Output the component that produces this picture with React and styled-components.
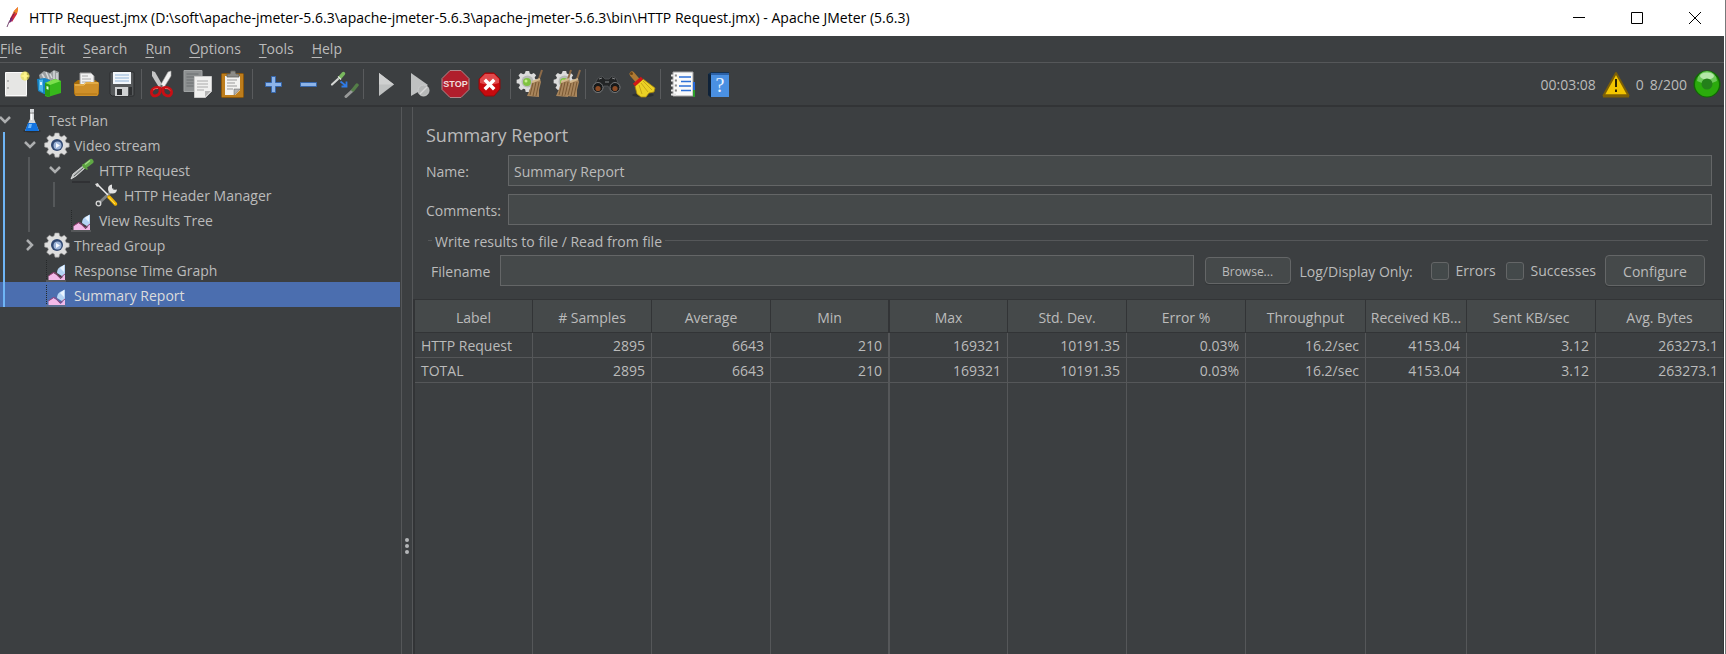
import React from "react";
import styled, { createGlobalStyle } from "styled-components";

const c = {
  bg: "#3c3f41",
  text: "#bbbbbb",
  line: "#555759",
  dark: "#323436",
  field: "#45494a",
  fieldBorder: "#646667",
  select: "#4b6eaf",
  accent: "#6fb5f5",
};

const Global = createGlobalStyle`
  * { box-sizing: border-box; }
  body { margin: 0; background: ${c.bg}; }
  body, button, input { font-family: "Open Sans", "Noto Sans", sans-serif; font-size: 14px; }
`;

const Window = styled.div`
  min-height: 100vh;
  display: flex;
  flex-direction: column;
  background: ${c.bg};
  color: ${c.text};
  line-height: 20px;
  border-right: 1px solid #77797a;
`;

/* Title bar */
const TitleBar = styled.header`
  height: 36px;
  flex: none;
  display: flex;
  align-items: center;
  padding: 0 1px 0 5px;
  background: #fff;
  color: #000;
`;
const WindowTitle = styled.h1`
  margin: 0 auto 0 8px;
  font-size: 14px;
  font-weight: 400;
  white-space: nowrap;
`;
const WindowButton = styled.button`
  width: 58px;
  height: 34px;
  display: flex;
  align-items: center;
  justify-content: center;
  padding: 0;
  border: 0;
  background: none;
`;

const Body = styled.div`
  flex: 1;
  display: flex;
  flex-direction: column;
  border-right: 1px solid #fff;
`;

/* Menu bar */
const MenuBar = styled.nav`
  height: 27px;
  display: flex;
  align-items: center;
  gap: 18px;
  border-bottom: 1px solid ${c.line};
`;
const MenuItem = styled.button`
  padding: 0;
  border: 0;
  background: none;
  color: inherit;
  line-height: 20px;
  &::first-letter {
    text-decoration: underline;
    text-underline-offset: 3px;
  }
`;

/* Tool bar */
const ToolBar = styled.div`
  height: 44px;
  display: flex;
  align-items: center;
  border-bottom: 2px solid ${c.dark};
`;
const ToolGroup = styled.div`
  height: 30px;
  display: flex;
  align-items: center;
  gap: 8px;
  padding: 0 4px 0 ${(p) => (p.$first ? "1px" : "6px")};
  border-right: ${(p) => (p.$last ? "0" : `1px solid #595b5d`)};
`;
const ToolButton = styled.button`
  width: 28px;
  height: 28px;
  padding: 0;
  border: 0;
  background: none;
  svg {
    display: block;
    overflow: visible;
  }
`;
const Status = styled.div`
  margin-left: auto;
  padding-right: 3px;
  display: flex;
  align-items: center;
  gap: 6px;
  span { padding-top: 2px; }
`;

/* Split view */
const Split = styled.main`
  flex: 1;
  display: flex;
`;
const TreePane = styled.aside`
  width: 401px;
  flex: none;
  padding-right: 1px;
`;
const TreeList = styled.ul`
  margin: 0;
  padding: 0;
  list-style: none;
`;
const TreeBranch = styled(TreeList)`
  background: linear-gradient(${(p) => (p.$active ? c.accent : "#55585a")} 0 0) ${(p) => p.$x}px 0 / 2px 100% no-repeat;
`;
const TreeRow = styled.div`
  height: 25px;
  display: flex;
  align-items: center;
  padding-left: ${(p) => p.$level * 25}px;
  background: ${(p) => (p.$selected ? `linear-gradient(${c.accent} 0 0) 3px 0 / 2px 100% no-repeat ${c.select}` : "none")};
  color: ${(p) => (p.$selected ? "#dcdcdc" : "inherit")};
  white-space: nowrap;
`;
const TreeLabel = styled.span`
  padding-top: 2px;
`;
const Toggle = styled.button`
  width: 10px;
  height: 12px;
  margin-right: 10px;
  padding: 0;
  border: 0;
  background: none;
  visibility: ${(p) => (p.$hidden ? "hidden" : "visible")};
  svg {
    display: block;
    overflow: visible;
  }
`;
const TreeIcon = styled.svg`
  width: 24px;
  height: 24px;
  margin-right: 5px;
  overflow: visible;
`;
const Divider = styled.div`
  width: 12px;
  flex: none;
  display: flex;
  flex-direction: column;
  align-items: center;
  justify-content: flex-end;
  gap: 2px;
  padding-bottom: 100px;
  border: solid ${c.line};
  border-width: 0 1px;
`;
const Dot = styled.span`
  width: 4px;
  height: 4px;
  border-radius: 50%;
  background: #b4b6b8;
`;

/* Report pane */
const Report = styled.section`
  flex: 1;
  min-width: 0;
  display: flex;
  flex-direction: column;
`;
const Heading = styled.h2`
  margin: 0;
  padding: 14px 13px 6px;
  font-size: 18px;
  line-height: 28px;
  font-weight: 400;
`;
const FieldGrid = styled.div`
  display: grid;
  grid-template-columns: 82px 1fr;
  row-gap: 8px;
  align-items: center;
  padding: 0 12px 0 13px;
  label { padding-top: 2px; }
`;
const TextField = styled.input`
  width: 100%;
  min-width: 0;
  height: 31px;
  padding: 2px 5px 0;
  border: 1px solid ${c.fieldBorder};
  background: ${c.field};
  color: ${c.text};
`;
const FileGroup = styled.fieldset`
  min-width: 0;
  margin: 4px 16px 13px 15px;
  padding: 3px 3px 0;
  border: 0;
  border-top: 1px solid ${c.line};
`;
const Legend = styled.legend`
  margin-left: 1px;
  padding: 3px 3px 0;
`;
const FileRow = styled.div`
  display: flex;
  align-items: center;
  white-space: nowrap;
`;
const FileLabel = styled.label`
  width: 69px;
  flex: none;
  padding-top: 2px;
`;
const PushButton = styled.button`
  width: ${(p) => (p.$small ? "86px" : "100px")};
  height: ${(p) => (p.$small ? "27px" : "31px")};
  flex: none;
  margin-left: ${(p) => (p.$small ? "11px" : "9px")};
  padding: 2px 0 0;
  border: 1px solid ${c.fieldBorder};
  border-radius: 4px;
  background: ${c.field};
  color: ${c.text};
  font-size: ${(p) => (p.$small ? "12px" : "14px")};
  box-shadow: 0 1px 0 #333638;
`;
const FilterLabel = styled.span`
  width: 121px;
  flex: none;
  margin-left: 9px;
  padding-top: 2px;
`;
const Check = styled.label`
  flex: none;
  display: flex;
  align-items: center;
  gap: 7px;
  margin-left: 10px;
  input {
    appearance: none;
    width: 18px;
    height: 18px;
    margin: 0;
    border: 1px solid ${c.fieldBorder};
    border-radius: 3px;
    background: #43494a;
  }
`;
const TableWrap = styled.div`
  flex: 1;
  display: flex;
  border-left: 2px solid ${c.dark};
  border-top: 1px solid ${c.dark};
`;
const Table = styled.table`
  width: 100%;
  table-layout: fixed;
  border-collapse: separate;
  border-spacing: 0;
`;
const HeadCell = styled.th`
  height: 33px;
  padding: 3px 0 0;
  font-weight: 400;
  white-space: nowrap;
  background: ${c.field};
  border-right: ${(p) => (p.$heavy ? 2 : 1)}px solid ${c.dark};
  border-bottom: 1px solid ${c.dark};
`;
const Cell = styled.td`
  height: 25px;
  padding: 2px 6px 0;
  line-height: 20px;
  text-align: right;
  border-right: ${(p) => (p.$heavy ? 2 : 1)}px solid ${c.line};
  border-bottom: 1px solid ${c.line};
  &:first-child { text-align: left; }
  &:last-child { border-right-color: ${c.dark}; padding-right: 5px; }
`;
const FillerRow = styled.tr`
  height: 100%;
`;
const FillerCell = styled(Cell)`
  height: auto;
  border-bottom: 0;
`;

const Svg = ({ children }) => (
  <svg width="28" height="28" viewBox="0 0 28 28" aria-hidden="true">{children}</svg>
);

const GEAR =
  "M10 0h4l.7 3 1.9.8L19.300 2.200l2.700 2.700-1.700 2.700.8 1.900 3.100.7v3.800l-3.100.7-.8 1.900 1.700 2.700-2.700 2.700-2.700-1.700-1.900.8-.7 3.100h-4l-.7-3.100-1.900-.8-2.700 1.700L1.700 19.300l1.700-2.700-.8-1.900L-.4 14v-4l3-.7.8-1.900L1.700 4.900l2.700-2.700 2.700 1.600L9 3z";

const NewIcon = () => (
  <Svg>
    <path d="M4.500 2.500h21v23h-21z" fill="#e6e6e4" stroke="#fbfbfb" />
    <path d="M4 26.500h22" stroke="#8b8b8b" />
    <path d="M6 11h2M6 18h2" stroke="#aaa" strokeWidth="1.500" />
    <circle cx="24" cy="6" r="4.500" fill="#e9df4b" opacity=".7" />
    <path d="M24 1l1.200 3.800L29 6l-3.800 1.200L24 11l-1.200-3.800L19 6l3.800-1.200z" fill="#fff58a" />
  </Svg>
);
const TemplatesIcon = () => (
  <Svg>
    <path d="M2 5l5-4 6 2 4-3 5 2v9l-8 3H4z" fill="#9a9ea0" />
    <path d="M5 4l3 5M9 2l3 7M13 4l2 4M17 1v8M20 3v7" stroke="#d5d8da" strokeWidth="1.500" />
    <path d="M0 9l8-1 5 2v15l-6-1-6-3z" fill="#1683c4" />
    <path d="M2 10l4-.5v13L2 20z" fill="#4db4e8" />
    <path d="M3 12h2v3H3z" fill="#d8f0ff" />
    <path d="M8 13l10-4 6 2v12l-13 4-3-1z" fill="#37b81c" />
    <path d="M8 13l10-4 6 2-11 4z" fill="#7ce04d" />
    <path d="M8 13l5 2v12l-5-2z" fill="#2a9c14" />
    <path d="M9.500 16l2 .8v3l-2-.8z" fill="#e5ffe0" />
  </Svg>
);
const OpenIcon = () => (
  <Svg>
    <path d="M1 13l4-3h17l4 3v11l-2 2H3l-2-2z" fill="#a66c09" />
    <path d="M7 3h11l3 3v12H7z" fill="#f1f1f1" stroke="#9d9d9d" />
    <path d="M9 6h6M9 9h9M9 12h9" stroke="#aaa" />
    <path d="M1 14h10l2-2h12l1 1-1 12-1 1H3l-1-1z" fill="#cf9029" />
    <path d="M2 15h9l2-2h12" stroke="#f2c463" fill="none" />
    <path d="M2 24h22" stroke="#b07414" />
  </Svg>
);
const SaveIcon = () => (
  <Svg>
    <path d="M1 3q0-1 1-1h22q1 0 1 1v22q0 1-1 1H3l-2-2z" fill="#55585a" stroke="#2b2d2e" />
    <path d="M4 2h18v12H4z" fill="#f2f6fa" />
    <path d="M6 5h14M6 8h14M6 11h14" stroke="#8fb2d6" />
    <path d="M6 17h13v9H6z" fill="#d0d2d3" />
    <path d="M8 19h5v6H8z" fill="#2c2e30" />
    <path d="M20 17h3v8h-3z" fill="#2f3133" />
  </Svg>
);
const CutIcon = () => (
  <Svg>
    <path d="M4 1l3 1 8 14-3 3L4 6z" fill="#c4c5c5" />
    <path d="M23 1l-3 1-8 14 3 3 8-13z" fill="#f1f1f1" stroke="#a5a5a5" strokeWidth=".6" />
    <circle cx="13.500" cy="16" r="1.200" fill="#666" />
    <path d="M12 18c-4-2-9 1-8.500 5 .8 5 7.500 3 8.500-1z M15 18c4-2 9 1 8.500 5-.8 5-7.500 3-8.500-1z" fill="none" stroke="#c90f14" strokeWidth="2.800" />
    <path d="M5 20q2-2 5-1.500M17 18.500q4-.5 5 2" stroke="#f25a5a" fill="none" />
  </Svg>
);
const CopyIcon = () => (
  <Svg>
    <path d="M0 .5h18v21H0z" fill="#8d9091" stroke="#a0a3a4" />
    <path d="M2.500 4h12M2.500 7h12M2.500 10h7M2.500 13h7M2.500 16h7" stroke="#6b6e70" />
    <path d="M10.500 6.500h17v15l-6 6h-11z" fill="#f0f0ef" stroke="#c9c9c9" />
    <path d="M13 11h11M13 14h11M13 17h11M13 20h7" stroke="#aaa" />
    <path d="M27 21l-6 6v-6z" fill="#b5b5b5" />
  </Svg>
);
const PasteIcon = () => (
  <Svg>
    <rect x="1.500" y="3.500" width="22" height="24" rx="1" fill="#bd7d1c" stroke="#8a570c" />
    <path d="M5 6h15v14l-5 5H5z" fill="#f2f2f0" />
    <path d="M7 10h10M7 13h8M7 16h10M7 19h6" stroke="#999" />
    <path d="M20 19l-6 6v-6z" fill="#b0b0b0" stroke="#666" strokeWidth=".5" />
    <path d="M7 7V4h3l1-3h4l1 3h3v3z" fill="#8c8c88" stroke="#5f5f5c" strokeWidth=".8" />
  </Svg>
);
const PlusIcon = () => (
  <Svg>
    <path d="M12.500 6.500h4v6h6v4h-6v6h-4v-6h-6v-4h6z" fill="#8db4e8" stroke="#3566ab" />
  </Svg>
);
const MinusIcon = () => (
  <Svg>
    <path d="M5.500 12.500h16v4h-16z" fill="#8db4e8" stroke="#3566ab" />
  </Svg>
);
const ToggleIcon = () => (
  <Svg>
    <path d="M1 14.500l6-5.500" stroke="#d4d6d4" strokeWidth="2.200" strokeLinecap="round" />
    <path d="M9 7.500l3.500-4" stroke="#79b85e" strokeWidth="3.500" strokeLinecap="round" />
    <path d="M7 6.500l3 3" stroke="#e5e5e5" strokeWidth="1.200" />
    <path d="M9.500 11.500l5 4M15.500 11.500v5h-5" stroke="#2f7be6" strokeWidth="1.800" fill="none" />
    <g opacity=".7">
      <path d="M15 26.500l6-5.500" stroke="#bfc1bf" strokeWidth="3" strokeLinecap="round" />
      <path d="M22 20l4-5" stroke="#5f9a4b" strokeWidth="3.500" strokeLinecap="round" />
    </g>
  </Svg>
);
const PlayIcon = () => (
  <Svg>
    <path d="M9 3l15 11.500L9 26z" fill="#bfc1c1" />
    <path d="M9 3l15 11.500H9z" fill="#cfd0d0" />
  </Svg>
);
const PlayNoPauseIcon = () => (
  <Svg>
    <path d="M5 3l17 12-10 7-7 4z" fill="#bfc1c1" />
    <circle cx="17.500" cy="20.500" r="5.500" fill="#b6b8b8" stroke="#cbcccc" />
    <path d="M14 24l7-7" stroke="#d8d8d8" strokeWidth="1.500" />
  </Svg>
);
const StopIcon = () => (
  <Svg>
    <path d="M8 .5h11l8 8v11l-8 8H8l-8-8v-11z" fill="#b01e2c" stroke="#b3868a" />
    <text x="13.500" y="17" textAnchor="middle" fontFamily="Liberation Sans, sans-serif" fontWeight="700" fontSize="9" fill="#f1dcdc">STOP</text>
  </Svg>
);
const ShutdownIcon = () => (
  <Svg>
    <path d="M7 3h9l6 6v10l-6 7H7l-6-7V9z" fill="#c80a0e" stroke="#8f0b0d" strokeLinejoin="round" />
    <path d="M7 4h9l5 5v4q-10 3-19 0V9z" fill="#e04a4c" />
    <path d="M8 11l7 7M15 11l-7 7" stroke="#fff" strokeWidth="3.500" strokeLinecap="square" />
  </Svg>
);
const Brush = ({ x = 0 }) => (
  <g transform={`translate(${x})`}>
    <path d="M26 0l-4 12" stroke="#8d6b48" strokeWidth="2" />
    <path d="M16 12l8-3 1 3-2 8v7l-12-1 3-7z" fill="#a8855c" />
    <path d="M17 13l-3 12M20 12l-3 14M23 12l-3 14" stroke="#74542f" strokeWidth=".9" />
    <path d="M16 12l8-3" stroke="#d3b88e" strokeWidth="2" />
  </g>
);
const SmallGear = () => (
  <g>
    <path transform="translate(0 1) scale(.87)" d={GEAR} fill="#dcdcdc" />
    <circle cx="10.500" cy="11.500" r="6" fill="#b7bab8" />
    <circle cx="10" cy="12" r="4" fill="#7fc241" />
    <circle cx="9" cy="11" r="1.500" fill="#c6f08e" />
  </g>
);
const ClearIcon = () => (
  <Svg><SmallGear /><Brush x={-1} /></Svg>
);
const ClearAllIcon = () => (
  <Svg><g transform="translate(1)"><SmallGear /></g><Brush x={-8} /><Brush x={1} /></Svg>
);
const SearchIcon = () => (
  <Svg>
    <path d="M6 8l4-2 3 3h4l3-3 4 2 4 9-3 5h-6l-3-6h-4l-3 6H3l-2-5z" fill="#222425" stroke="#56595b" strokeWidth=".7" />
    <circle cx="6" cy="17.500" r="5" fill="#17191a" stroke="#77797b" />
    <circle cx="23" cy="17.500" r="5" fill="#17191a" stroke="#77797b" />
    <circle cx="6" cy="18.500" r="2.600" fill="#8d4b24" />
    <circle cx="23" cy="18.500" r="2.600" fill="#8d4b24" />
    <path d="M7 9l3-1M20 8l3 1M13 12h4" stroke="#85888a" />
  </Svg>
);
const BroomIcon = () => (
  <Svg>
    <ellipse cx="15" cy="25" rx="11" ry="2" fill="#2d3031" />
    <path d="M4 4l6 7" stroke="#b07a32" strokeWidth="5" strokeLinecap="round" />
    <circle cx="3.500" cy="3.500" r="1.500" fill="#6d4515" />
    <path d="M7 16l8-7 12 9-1 4-5 1-3 4-5 0-4-3z" fill="#ecd124" stroke="#a9890d" strokeWidth=".8" />
    <path d="M11 15l3 9M13 13l7 9M15 11l9 9" stroke="#c7a718" />
    <path d="M6 15l8-7" stroke="#cf1717" strokeWidth="3.500" />
  </Svg>
);
const NotebookIcon = () => (
  <Svg>
    <path d="M6 2h20v24H6z" fill="#fafafa" stroke="#a2a2a2" />
    <path d="M12 7h12M14 11.500h10M12 16h12M14 20.500h10" stroke="#2d6fd6" strokeWidth="1.500" />
    <path d="M26 12h2v8h-2z" fill="#2769d8" />
    <path d="M26 20h2v7h-2z" fill="#2c9f2c" />
    <path d="M4 5.500h5M4 10.500h5M4 15.500h5M4 20.500h5M4 24.500h5" stroke="#e4e4e4" strokeWidth="2" />
    <path d="M8.500 5.500h1M8.500 10.500h1M8.500 15.500h1M8.500 20.500h1" stroke="#333" strokeWidth="2" />
  </Svg>
);
const HelpIcon = () => (
  <Svg>
    <path d="M5 4l3-2h18v2L8 6v22l-3-3z" fill="#15314f" />
    <path d="M5 4v21l3 2V5z" fill="#0f2238" />
    <path d="M8 4h18v23H8z" fill="#4a90e2" />
    <path d="M8 3h18v2H8z" fill="#2c62a8" />
    <text x="17" y="22" textAnchor="middle" fontFamily="Liberation Serif, serif" fontSize="20" fill="#eaf4ff">?</text>
  </Svg>
);

const toolGroups = [
  [["New", NewIcon], ["Templates", TemplatesIcon], ["Open", OpenIcon], ["Save", SaveIcon]],
  [["Cut", CutIcon], ["Copy", CopyIcon], ["Paste", PasteIcon]],
  [["Expand All", PlusIcon], ["Collapse All", MinusIcon], ["Toggle", ToggleIcon]],
  [["Start", PlayIcon], ["Start no pauses", PlayNoPauseIcon], ["Stop", StopIcon], ["Shutdown", ShutdownIcon]],
  [["Clear", ClearIcon], ["Clear All", ClearAllIcon]],
  [["Search", SearchIcon], ["Reset Search", BroomIcon]],
  [["Function Helper", NotebookIcon], ["Help", HelpIcon]],
];

const WarningIcon = () => (
  <Svg>
    <path d="M14 3L1.500 25.500h25z" fill="#f2c500" stroke="#7c5f06" strokeWidth="2" strokeLinejoin="round" />
    <path d="M1 26h26" stroke="#7c5f06" strokeWidth="3" />
    <path d="M14 9v8" stroke="#2a2200" strokeWidth="2" />
    <path d="M14 19.500v2.500" stroke="#2a2200" strokeWidth="2" />
  </Svg>
);
const RunningIcon = () => (
  <Svg>
    <circle cx="14" cy="14" r="13.500" fill="#0f6a03" />
    <circle cx="14" cy="14.500" r="12" fill="#2bab0c" />
    <path d="M4 11a10 10 0 0 1 20 0q-10 5-20 0z" fill="#6cc959" />
    <ellipse cx="14" cy="6" rx="7" ry="3.500" fill="#b4e8a8" />
    <circle cx="14" cy="14" r="5.500" fill="#24801a" />
  </Svg>
);
const FeatherIcon = () => (
  <svg width="16" height="22" viewBox="0 0 16 22" aria-hidden="true">
    <path d="M13 0L9 4 5 12l2 3 5-8z" fill="#d2283a" />
    <path d="M13 0L9 4l-1 3 4-1 1-3z" fill="#f08a24" />
    <path d="M6 10l-2 6 2-1 2-3z" fill="#7b2a7d" />
    <path d="M10 5L4 15l-2 5" stroke="#5a2152" fill="none" strokeWidth=".8" />
  </svg>
);

const FlaskIcon = () => (
  <TreeIcon viewBox="0 0 24 24" aria-hidden="true">
    <ellipse cx="12" cy="23" rx="9" ry="1.500" fill="#2c2f30" />
    <path d="M10 1h4v10l5 12H5l5-12z" fill="#d4d7da" />
    <path d="M8 15h8l3 8H5z" fill="#1273e0" />
    <path d="M9 16h3l-1 4H8z" fill="#6db8ff" />
    <path d="M11.500 4v8" stroke="#fff" strokeWidth="1.500" />
    <path d="M10 5h4" stroke="#777" />
  </TreeIcon>
);
const GearIcon = () => (
  <TreeIcon viewBox="0 0 24 24" aria-hidden="true">
    <path d={GEAR} fill="#dedede" stroke="#9c9c9c" strokeWidth=".6" />
    <circle cx="12" cy="12" r="6" fill="#2f4771" />
    <circle cx="12.500" cy="12.500" r="4" fill="#9db4d8" />
    <path d="M11 10l4 2.500-4 2.500z" fill="#f4f8ff" />
  </TreeIcon>
);
const PipetteIcon = () => (
  <TreeIcon viewBox="0 0 24 24" aria-hidden="true">
    <path d="M2 24h18" stroke="#2c2e30" strokeWidth="1.500" />
    <path d="M1 21l2-5 10-8 2 2-9 8z" fill="#b8bcbc" stroke="#e8e8e8" strokeWidth=".8" />
    <path d="M4 18l9-8" stroke="#5c6061" strokeWidth="1" />
    <path d="M15 8l6-4.500" stroke="#5fa844" strokeWidth="5" strokeLinecap="round" />
    <path d="M15 6.500l5-4" stroke="#a3d888" strokeWidth="1.500" />
    <path d="M12.500 6.500l5 5" stroke="#5da43f" strokeWidth="1.500" />
  </TreeIcon>
);
const ToolsIcon = () => (
  <TreeIcon viewBox="0 0 24 24" aria-hidden="true">
    <path d="M4 20L19 6" stroke="#7f8283" strokeWidth="3" />
    <circle cx="3.500" cy="20.500" r="2.300" fill="none" stroke="#d8d8d8" strokeWidth="1.300" />
    <path d="M17 1.500a4.500 4.500 0 1 0 5 5l-3.500.5-1.500-2z" fill="#e2e2e2" />
    <path d="M2 1l11 11" stroke="#eee" strokeWidth="1.500" />
    <path d="M0 1l3-1 1 3-2 1z" fill="#ddd" />
    <path d="M14 14l6.500 7" stroke="#f0b400" strokeWidth="3.500" strokeLinecap="round" />
    <path d="M13.500 14l6.500 7" stroke="#ffe066" />
  </TreeIcon>
);
const ChartIcon = () => (
  <TreeIcon viewBox="0 0 24 24" aria-hidden="true">
    <path d="M1.500 2v20" stroke="#26292a" strokeDasharray="1 1" />
    <path d="M1 23h20" stroke="#6e7172" />
    <path d="M12 15q0-4 3-6l5-2.500V20z" fill="#b5d4f4" />
    <path d="M15 10l4-3v7z" fill="#eaf4ff" />
    <path d="M3.500 22v-4l5-3 3 2 4 4 4.500-4v5z" fill="#f3b9e8" />
    <path d="M3.500 18l5-3.500 3 1M11.500 16l3.500 4 5-4" stroke="#a0407a" fill="none" />
  </TreeIcon>
);

const Chevron = ({ open }) => (
  <svg width="10" height="12" viewBox="0 0 10 12" fill="none" stroke="#adafb0" strokeWidth="2.500" aria-hidden="true">
    <path d={open ? "M0 3l5 5 5-5" : "M2 1l5 5-5 5"} />
  </svg>
);

const Node = ({ label, icon: Icon, level, open, leaf, selected, children }) => (
  <li>
    <TreeRow $level={level} $selected={selected}>
      <Toggle $hidden={leaf} aria-label={`Toggle ${label}`}><Chevron open={open} /></Toggle>
      <Icon />
      <TreeLabel>{label}</TreeLabel>
    </TreeRow>
    {children && <TreeBranch $x={level * 25 + 3} $active={level === 0}>{children}</TreeBranch>}
  </li>
);

const menus = ["File", "Edit", "Search", "Run", "Options", "Tools", "Help"];

const columns = [
  ["Label", 118],
  ["# Samples", 119],
  ["Average", 119],
  ["Min", 119],
  ["Max", 118],
  ["Std. Dev.", 119],
  ["Error %", 119],
  ["Throughput", 120],
  ["Received KB...", 101],
  ["Sent KB/sec", 129],
  ["Avg. Bytes", 128],
];
const HEAVY = 3;

const rows = [
  ["HTTP Request", "2895", "6643", "210", "169321", "10191.35", "0.03%", "16.2/sec", "4153.04", "3.12", "263273.1"],
  ["TOTAL", "2895", "6643", "210", "169321", "10191.35", "0.03%", "16.2/sec", "4153.04", "3.12", "263273.1"],
];

export default function App() {
  return (
    <>
      <Global />
      <Window>
        <TitleBar>
          <FeatherIcon />
          <WindowTitle>
            {"HTTP Request.jmx (D:\\soft\\apache-jmeter-5.6.3\\apache-jmeter-5.6.3\\apache-jmeter-5.6.3\\bin\\HTTP Request.jmx) - Apache JMeter (5.6.3)"}
          </WindowTitle>
          <WindowButton aria-label="Minimize">
            <svg width="12" height="12"><path d="M0 5.500h12" stroke="#000" /></svg>
          </WindowButton>
          <WindowButton aria-label="Maximize">
            <svg width="12" height="12"><path d="M.5.5h11v11H.5z" stroke="#000" fill="none" /></svg>
          </WindowButton>
          <WindowButton aria-label="Close">
            <svg width="12" height="12"><path d="M0 0l12 12M12 0L0 12" stroke="#000" /></svg>
          </WindowButton>
        </TitleBar>
        <Body>
          <MenuBar>
            {menus.map((m) => <MenuItem key={m}>{m}</MenuItem>)}
          </MenuBar>
          <ToolBar>
            {toolGroups.map((group, i) => (
              <ToolGroup key={i} $first={i === 0} $last={i === toolGroups.length - 1}>
                {group.map(([name, Icon]) => (
                  <ToolButton key={name} aria-label={name}><Icon /></ToolButton>
                ))}
              </ToolGroup>
            ))}
            <Status>
              <span>00:03:08</span>
              <WarningIcon />
              <span>0</span>
              <span>8/200</span>
              <RunningIcon />
            </Status>
          </ToolBar>
          <Split>
            <TreePane>
              <TreeList>
                <Node label="Test Plan" icon={FlaskIcon} level={0} open>
                  <Node label="Video stream" icon={GearIcon} level={1} open>
                    <Node label="HTTP Request" icon={PipetteIcon} level={2} open>
                      <Node label="HTTP Header Manager" icon={ToolsIcon} level={3} leaf />
                    </Node>
                    <Node label="View Results Tree" icon={ChartIcon} level={2} leaf />
                  </Node>
                  <Node label="Thread Group" icon={GearIcon} level={1} />
                  <Node label="Response Time Graph" icon={ChartIcon} level={1} leaf />
                  <Node label="Summary Report" icon={ChartIcon} level={1} leaf selected />
                </Node>
              </TreeList>
            </TreePane>
            <Divider><Dot /><Dot /><Dot /></Divider>
            <Report>
              <Heading>Summary Report</Heading>
              <FieldGrid>
                <label htmlFor="name">Name:</label>
                <TextField id="name" defaultValue="Summary Report" />
                <label htmlFor="comments">Comments:</label>
                <TextField id="comments" />
              </FieldGrid>
              <FileGroup>
                <Legend>Write results to file / Read from file</Legend>
                <FileRow>
                  <FileLabel htmlFor="filename">Filename</FileLabel>
                  <TextField id="filename" />
                  <PushButton $small>Browse...</PushButton>
                  <FilterLabel>Log/Display Only:</FilterLabel>
                  <Check><input type="checkbox" />Errors</Check>
                  <Check><input type="checkbox" />Successes</Check>
                  <PushButton>Configure</PushButton>
                </FileRow>
              </FileGroup>
              <TableWrap>
                <Table>
                  <colgroup>
                    {columns.map(([name, width]) => <col key={name} width={width} />)}
                  </colgroup>
                  <thead>
                    <tr>
                      {columns.map(([name], i) => <HeadCell key={name} scope="col" $heavy={i === HEAVY}>{name}</HeadCell>)}
                    </tr>
                  </thead>
                  <tbody>
                    {rows.map((row) => (
                      <tr key={row[0]}>
                        {row.map((value, i) => <Cell key={i} $heavy={i === HEAVY}>{value}</Cell>)}
                      </tr>
                    ))}
                    <FillerRow aria-hidden="true">
                      {columns.map(([name], i) => <FillerCell key={name} $heavy={i === HEAVY} />)}
                    </FillerRow>
                  </tbody>
                </Table>
              </TableWrap>
            </Report>
          </Split>
        </Body>
      </Window>
    </>
  );
}
